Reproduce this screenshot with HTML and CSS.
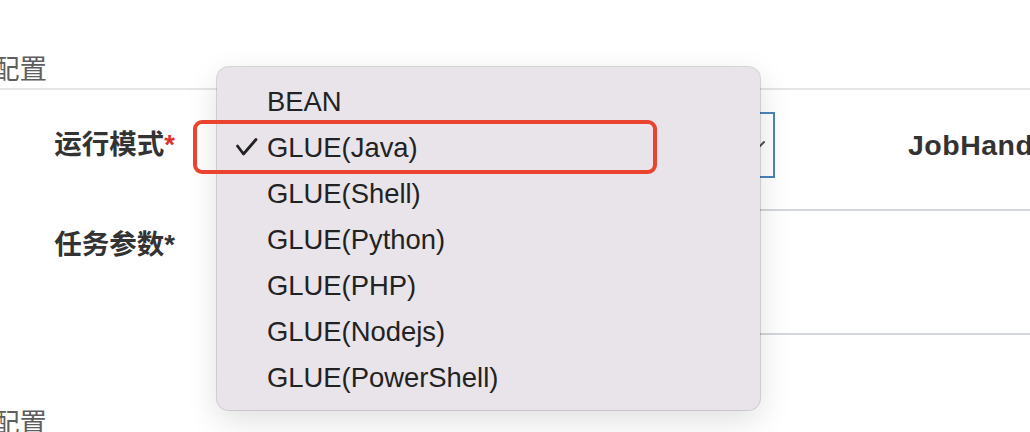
FILE: index.html
```html
<!DOCTYPE html>
<html lang="zh">
<head>
<meta charset="utf-8">
<title>任务配置</title>
<link rel="stylesheet" href="styles.css">
</head>
<body>
<div class="page">
  <h2 class="legend">配置</h2>
  <div class="row row-mode">
    <label class="label">运行模式<span class="req">*</span></label>
    <div class="select">
      <svg class="chev" width="14" height="8" viewBox="0 0 14 8"><polyline points="1,1 7,7 13,1" fill="none" stroke="#555" stroke-width="2" stroke-linecap="round" stroke-linejoin="round"/></svg>
    </div>
    <label class="label label-side">JobHandler<span class="req">*</span></label>
  </div>
  <div class="row row-param">
    <label class="label label-top">任务参数*</label>
    <div class="textarea"></div>
  </div>
  <h2 class="legend legend-bottom">配置</h2>
</div>

<ul class="menu">
  <li class="item">BEAN</li>
  <li class="item selected"><svg class="check" width="22" height="18" viewBox="0 0 22 18"><polyline points="1.5,8 7.5,16 20,1.5" fill="none" stroke="#222" stroke-width="2.8" stroke-linecap="round" stroke-linejoin="round"/></svg>GLUE(Java)</li>
  <li class="item">GLUE(Shell)</li>
  <li class="item">GLUE(Python)</li>
  <li class="item">GLUE(PHP)</li>
  <li class="item">GLUE(Nodejs)</li>
  <li class="item">GLUE(PowerShell)</li>
</ul>
<div class="annot"></div>
</body>
</html>
```

FILE: styles.css
```css
html, body {
  margin: 0;
  padding: 0;
  background: #ffffff;
}
body {
  position: relative;
  width: 1030px;
  height: 432px;
  overflow: hidden;
  font-family: "Liberation Sans", Arial, "Noto Sans CJK SC", sans-serif;
  color: #333;
}
.page {
  width: 1300px;
}
.legend {
  margin: 0;
  padding: 54px 0 2px 0;
  font-size: 27.5px;
  line-height: 32px;
  font-weight: normal;
  color: #5e5e5e;
  text-indent: -8px;
  border-bottom: 2px solid #e4e5e7;
}
.legend-bottom {
  padding-top: 73px;
  border-bottom: none;
}
.row {
  display: flex;
}
.row-mode {
  align-items: center;
  padding: 22px 0 31px 0;
}
.label {
  width: 175px;
  flex: none;
  text-align: right;
  font-size: 27.5px;
  font-weight: bold;
  color: #333;
  line-height: 32px;
  white-space: nowrap;
}
.req {
  color: #e0302a;
}
.label-side {
  width: auto;
  margin-left: 133px;
  font-size: 28.5px;
  letter-spacing: 0.5px;
}
.label-side .req {
  color: #333;
}
.select {
  box-sizing: border-box;
  width: 550px;
  height: 66px;
  margin-left: 50px;
  border: 2px solid #4b84bb;
  display: flex;
  align-items: center;
  justify-content: flex-end;
  padding: 0 8px 0 16px;
}
.chev {
  display: block;
}
.row-param {
  align-items: flex-start;
}
.label-top {
  padding-top: 20px;
}
.textarea {
  flex: 1;
  height: 122px;
  margin-left: 50px;
  border-top: 2px solid #d3d6da;
  border-bottom: 2px solid #d3d6da;
}
.menu {
  position: absolute;
  left: 217px;
  top: 67px;
  width: 543px;
  height: 343px;
  box-sizing: border-box;
  margin: 0;
  padding: 12px 0 0 0;
  list-style: none;
  background: #e8e4ea;
  border-radius: 12px;
  box-shadow: 0 0 0 1px rgba(0, 0, 0, 0.14), 0 10px 32px rgba(0, 0, 0, 0.13);
}
.item {
  position: relative;
  height: 46px;
  line-height: 46px;
  padding-left: 50px;
  font-size: 27.4px;
  color: #222;
}
.check {
  position: absolute;
  left: 19px;
  top: 13px;
}
.annot {
  position: absolute;
  left: 193px;
  top: 120px;
  width: 464px;
  height: 54px;
  box-sizing: border-box;
  border: 4px solid #ea4330;
  border-radius: 9px;
}
```
